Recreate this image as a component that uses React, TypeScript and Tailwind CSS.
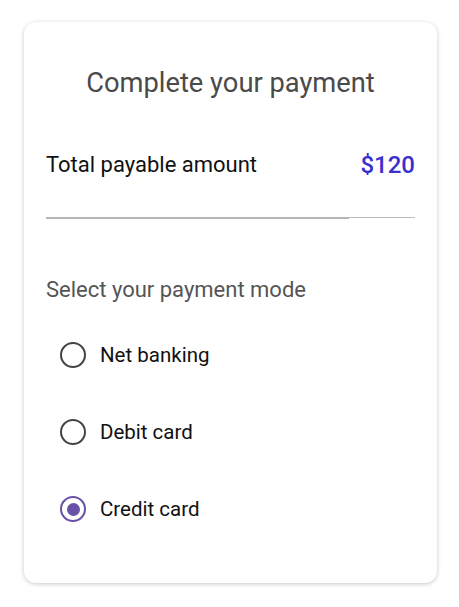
import { useState } from "react";

const modes = ["Net banking", "Debit card", "Credit card"];

export default function App() {
  const [mode, setMode] = useState("Credit card");

  return (
    <div className="min-h-screen bg-white pt-[22px] pl-[24px] font-['Roboto',sans-serif]">
      <div className="w-[413px] h-[561px] rounded-[12px] bg-white shadow-[0_1px_4px_rgba(0,0,0,0.22)] px-[22px] pt-[45px]">
        <h1 className="text-center text-[27.3px] leading-[32px] text-[#4a4a4a]">
          Complete your payment
        </h1>

        <div className="mt-[51px] flex items-center justify-between h-[30px]">
          <span className="text-[22px] leading-[30px] text-[#111]">Total payable amount</span>
          <span className="text-[24px] leading-[30px] font-medium text-[#3a2fd0]">$120</span>
        </div>

        {/* divider */}
        <div className="mt-[37px] flex">
          <div className="h-[2px] flex-1 bg-[#b5b5b5]" />
          <div className="h-[1px] w-[66px] bg-[#bdbdbd]" />
        </div>

        <p className="mt-[58px] text-[22px] leading-[26px] text-[#555]">Select your payment mode</p>

        <div className="mt-[39px] flex flex-col gap-[51px] pl-[14px]">
          {modes.map((m) => {
            const checked = m === mode;
            return (
              <label
                key={m}
                onClick={() => setMode(m)}
                className="flex items-center gap-[14px] cursor-pointer h-[26px]"
              >
                <span
                  className={
                    checked
                      ? "w-[26px] h-[26px] rounded-full border-[2.5px] border-[#6a51a8] flex items-center justify-center"
                      : "w-[26px] h-[26px] rounded-full border-[2.5px] border-[#444] flex items-center justify-center"
                  }
                >
                  {checked && <span className="w-[13px] h-[13px] rounded-full bg-[#6a51a8]" />}
                </span>
                <span className="text-[20.5px] leading-[26px] text-[#111]">{m}</span>
              </label>
            );
          })}
        </div>
      </div>
    </div>
  );
}
